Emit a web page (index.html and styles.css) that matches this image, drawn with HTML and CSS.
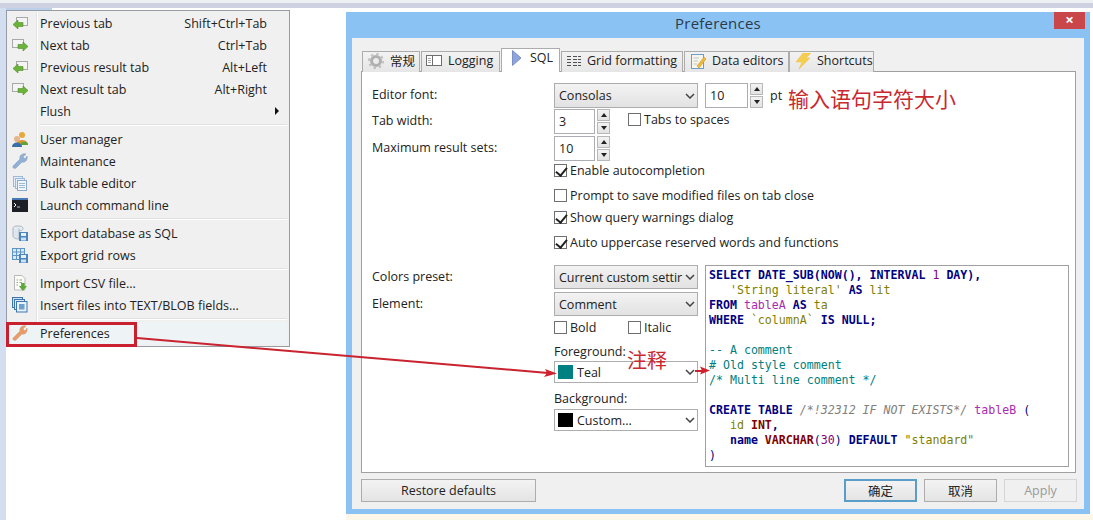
FILE: index.html
```html
<!DOCTYPE html>
<html lang="en">
<head>
<meta charset="utf-8">
<title>Preferences</title>
<link rel="stylesheet" href="styles.css">
</head>
<body>
<svg class="defs" width="0" height="0" aria-hidden="true">
  <defs>
    <symbol id="i-prev" viewBox="0 0 16 16">
      <rect x="4.500" y="2.500" width="11" height="8" fill="#f4f4f4" stroke="#a9a9a9"/>
      <path d="M1 9.500 L6 5 V7.500 H11 V11.500 H6 V14 Z" fill="#6cb33a" stroke="#4d8f26" stroke-width=".6"/>
    </symbol>
    <symbol id="i-next" viewBox="0 0 16 16">
      <rect x=".5" y="2.500" width="11" height="8" fill="#f4f4f4" stroke="#a9a9a9"/>
      <path d="M16 9.500 L11 5 V7.500 H6 V11.500 H11 V14 Z" fill="#6cb33a" stroke="#4d8f26" stroke-width=".6"/>
    </symbol>
    <symbol id="i-users" viewBox="0 0 16 16">
      <circle cx="10" cy="4" r="3" fill="#e8a83c"/>
      <path d="M5 12 C5 8 15 8 15 12 V13 H5 Z" fill="#d8942c"/>
      <path d="M9 13 C9 10 16 10 16 13 V14 H9 Z" fill="#5ca53a"/>
      <circle cx="5" cy="8" r="3" fill="#e6b48c"/>
      <path d="M0 16 C0 10 10 10 10 16 Z" fill="#3a6ea8"/>
    </symbol>
    <symbol id="i-wrench" viewBox="0 0 16 16">
      <path d="M1 13 L8 6 C7 3 10 0 14 1 L11 4 L13 6 L15 3 C16 7 13 10 10 9 L4 15 C3 16 0 15 1 13 Z" fill="#8fb0d8" stroke="#8c9aac" stroke-width=".5"/>
    </symbol>
    <symbol id="i-wrench-o" viewBox="0 0 16 16">
      <path d="M1 13 L8 6 C7 3 10 0 14 1 L11 4 L13 6 L15 3 C16 7 13 10 10 9 L4 15 C3 16 0 15 1 13 Z" fill="#ee9a62" stroke="#b0a79e" stroke-width=".5"/>
    </symbol>
    <symbol id="i-bulk" viewBox="0 0 16 16">
      <rect x="1.500" y="1.500" width="9" height="10" fill="#e4eef8" stroke="#9dbad8"/>
      <rect x="3.500" y="3.500" width="9" height="10" fill="#e4eef8" stroke="#9dbad8"/>
      <rect x="5.500" y="5.500" width="9" height="10" fill="#f2f7fc" stroke="#8aaccf"/>
      <path d="M7 8.500 H13 M7 10.500 H13 M7 12.500 H13" stroke="#9dbad8"/>
    </symbol>
    <symbol id="i-cmd" viewBox="0 0 16 16">
      <rect x="0" y="1" width="16" height="14" fill="#1c2026"/>
      <rect x="0" y="1" width="16" height="2" fill="#4a78b4"/>
      <path d="M2 6 L4 8 L2 10" stroke="#fff" fill="none"/>
      <path d="M5 10 H8" stroke="#bbb"/>
    </symbol>
    <symbol id="i-expdb" viewBox="0 0 16 16">
      <ellipse cx="6" cy="3.500" rx="5" ry="2.500" fill="#e8edf2" stroke="#a8b6c4"/>
      <path d="M1 3.500 V11 C1 13 4 14 7 14 V3.500" fill="#dfe6ec" stroke="#a8b6c4"/>
      <rect x="7" y="7" width="9" height="9" fill="#4d86bd"/>
      <rect x="9" y="8" width="5" height="3" fill="#e8f0f8"/>
      <rect x="9" y="12.500" width="5" height="3" fill="#cfe0f0"/>
    </symbol>
    <symbol id="i-expgrid" viewBox="0 0 16 16">
      <rect x=".5" y="1.500" width="12" height="11" fill="#dceaf6" stroke="#5d95c8"/>
      <path d="M.5 5 H12.500 M.5 8.500 H12.500 M4.500 1.500 V12.500 M8.500 1.500 V12.500" stroke="#5d95c8"/>
      <rect x="7" y="7" width="9" height="9" fill="#4d86bd"/>
      <rect x="9" y="8" width="5" height="3" fill="#e8f0f8"/>
      <rect x="9" y="12.500" width="5" height="3" fill="#cfe0f0"/>
    </symbol>
    <symbol id="i-csv" viewBox="0 0 16 16">
      <path d="M2.500 .5 H10 L13 3.500 V15 H2.500 Z" fill="#fbfbfb" stroke="#b8b8b8"/>
      <path d="M4.500 5 H6 M7.500 5 H10 M4.500 7.500 H6 M7.500 7.500 H10 M4.500 10 H6" stroke="#8fae6a"/>
      <path d="M9 8 H13 V11 H15.500 L11 16 L6.500 11 H9 Z" fill="#5da83a" transform="translate(1 0) scale(.9 1)"/>
    </symbol>
    <symbol id="i-ins" viewBox="0 0 16 16">
      <rect x=".5" y=".5" width="10" height="10" fill="#cfe0f0" stroke="#3f77ad"/>
      <rect x="2.500" y="2.500" width="10" height="10" fill="#dcebf8" stroke="#3f77ad"/>
      <rect x="4.500" y="4.500" width="10.500" height="10.500" fill="#e8f2fb" stroke="#3f77ad"/>
      <rect x="7" y="7" width="5.500" height="5.500" fill="#6fa0cf"/>
    </symbol>
    <symbol id="i-gear" viewBox="0 0 16 16">
      <circle cx="8" cy="8" r="4.500" fill="none" stroke="#b0b0b0" stroke-width="3"/>
      <circle cx="8" cy="8" r="7" fill="none" stroke="#c0c0c0" stroke-width="2" stroke-dasharray="2.500 3"/>
    </symbol>
    <symbol id="i-log" viewBox="0 0 16 16">
      <rect x=".5" y="2.500" width="15" height="10" fill="#fff" stroke="#6e6e6e"/>
      <path d="M6.500 2.500 V12.500" stroke="#6e6e6e"/>
      <path d="M2 5.500 H5 M2 7.500 H5 M2 9.500 H5" stroke="#a8a8a8"/>
    </symbol>
    <symbol id="i-sql" viewBox="0 0 16 16">
      <path d="M3.500 .5 L12 8 L3.500 15.500 Z" fill="#8ea4dc" stroke="#7b90c8"/>
    </symbol>
    <symbol id="i-grid" viewBox="0 0 16 16">
      <path d="M1 3.500 H5 M1 6.500 H5 M1 9.500 H5 M1 12.500 H5 M7 3.500 H11 M7 6.500 H11 M7 9.500 H11 M7 12.500 H11 M12 3.500 H15 M12 6.500 H15 M12 9.500 H15 M12 12.500 H15" stroke="#505050"/>
    </symbol>
    <symbol id="i-data" viewBox="0 0 16 16">
      <rect x="1.500" y="1.500" width="12" height="14" fill="#f6f6ee" stroke="#6c9cc8"/>
      <path d="M3.500 5 H9 M3.500 8 H8 M3.500 11 H7" stroke="#bfc4c8"/>
      <path d="M7 13 L14 4 L16 6 L9 15 Z" fill="#efbb3c" stroke="#c88a20" stroke-width=".5"/>
    </symbol>
    <symbol id="i-bolt" viewBox="0 0 16 16">
      <path d="M8 0 H16 L11 5 H15 L4 16 L7 9 H1 Z" fill="#f5cd50" stroke="#eec04a" stroke-width=".5"/>
    </symbol>
    <symbol id="i-chev" viewBox="0 0 10 6">
      <path d="M1 1 L5 5 L9 1" fill="none" stroke="#444" stroke-width="1.500"/>
    </symbol>
  </defs>
</svg>

<main class="desktop">
  <div class="strip-top"></div>
  <div class="strip-left"></div>
  <div class="menu-tab"></div>

  <nav class="menu">
    <div class="item"><svg class="ico"><use href="#i-prev"/></svg><span class="lbl">Previous tab</span><span class="key">Shift+Ctrl+Tab</span></div>
    <div class="item"><svg class="ico"><use href="#i-next"/></svg><span class="lbl">Next tab</span><span class="key">Ctrl+Tab</span></div>
    <div class="item"><svg class="ico"><use href="#i-prev"/></svg><span class="lbl">Previous result tab</span><span class="key">Alt+Left</span></div>
    <div class="item"><svg class="ico"><use href="#i-next"/></svg><span class="lbl">Next result tab</span><span class="key">Alt+Right</span></div>
    <div class="item"><span class="ico"></span><span class="lbl">Flush</span><span class="sub"></span></div>
    <div class="sep"></div>
    <div class="item"><svg class="ico"><use href="#i-users"/></svg><span class="lbl">User manager</span></div>
    <div class="item"><svg class="ico"><use href="#i-wrench"/></svg><span class="lbl">Maintenance</span></div>
    <div class="item"><svg class="ico"><use href="#i-bulk"/></svg><span class="lbl">Bulk table editor</span></div>
    <div class="item"><svg class="ico"><use href="#i-cmd"/></svg><span class="lbl">Launch command line</span></div>
    <div class="sep"></div>
    <div class="item"><svg class="ico"><use href="#i-expdb"/></svg><span class="lbl">Export database as SQL</span></div>
    <div class="item"><svg class="ico"><use href="#i-expgrid"/></svg><span class="lbl">Export grid rows</span></div>
    <div class="sep"></div>
    <div class="item"><svg class="ico"><use href="#i-csv"/></svg><span class="lbl">Import CSV file...</span></div>
    <div class="item"><svg class="ico"><use href="#i-ins"/></svg><span class="lbl">Insert files into TEXT/BLOB fields...</span></div>
    <div class="sep"></div>
    <div class="item item-hot"><svg class="ico"><use href="#i-wrench-o"/></svg><span class="lbl">Preferences</span></div>
  </nav>

  <section class="dialog">
    <header class="titlebar">
      <h1 class="title">Preferences</h1>
      <span class="close">×</span>
    </header>
    <div class="client">
      <div class="tabs">
        <div class="tab t1"><svg class="tab-ico"><use href="#i-gear"/></svg><span class="cjk">常规</span></div>
        <div class="tab t2"><svg class="tab-ico"><use href="#i-log"/></svg>Logging</div>
        <div class="tab t3 active"><svg class="tab-ico"><use href="#i-sql"/></svg>SQL</div>
        <div class="tab t4"><svg class="tab-ico"><use href="#i-grid"/></svg>Grid formatting</div>
        <div class="tab t5"><svg class="tab-ico"><use href="#i-data"/></svg>Data editors</div>
        <div class="tab t6"><svg class="tab-ico"><use href="#i-bolt"/></svg>Shortcuts</div>
      </div>

      <div class="panel">
        <div class="row r-font">
          <label class="lab">Editor font:</label>
          <div class="sel sel-font">Consolas<svg class="chev"><use href="#i-chev"/></svg></div>
          <div class="spin spin-gap"><div class="num">10</div><div class="arrows"><span class="up"></span><span class="dn"></span></div></div>
          <span class="pt">pt</span>
        </div>
        <div class="row r-tab">
          <label class="lab">Tab width:</label>
          <div class="spin"><div class="num">3</div><div class="arrows"><span class="up"></span><span class="dn"></span></div></div>
          <div class="chk chk-tabs"><span class="box"></span>Tabs to spaces</div>
        </div>
        <div class="row r-max">
          <label class="lab">Maximum result sets:</label>
          <div class="spin"><div class="num">10</div><div class="arrows"><span class="up"></span><span class="dn"></span></div></div>
        </div>
        <div class="checks">
          <div class="chk c1"><span class="box on"></span>Enable autocompletion</div>
          <div class="chk c2"><span class="box"></span>Prompt to save modified files on tab close</div>
          <div class="chk c3"><span class="box on"></span>Show query warnings dialog</div>
          <div class="chk c4"><span class="box on"></span>Auto uppercase reserved words and functions</div>
        </div>

        <div class="lower">
          <div class="lower-labels">
            <label class="lab lab-c">Colors preset:</label>
            <label class="lab lab-e">Element:</label>
          </div>
          <div class="lower-ctrl">
            <div class="sel sel-a"><span class="preset">Current custom settir</span><svg class="chev"><use href="#i-chev"/></svg></div>
            <div class="sel sel-b">Comment<svg class="chev"><use href="#i-chev"/></svg></div>
            <div class="style-row">
              <div class="chk chk-bold"><span class="box"></span>Bold</div>
              <div class="chk"><span class="box"></span>Italic</div>
            </div>
            <div class="cap cap-f">Foreground:</div>
            <div class="sel sel-c"><span class="swatch teal"></span>Teal<svg class="chev"><use href="#i-chev"/></svg></div>
            <div class="cap cap-b">Background:</div>
            <div class="sel sel-c sel-d"><span class="swatch black"></span>Custom...<svg class="chev"><use href="#i-chev"/></svg></div>
          </div>
<pre class="code"><b>SELECT</b> <b>DATE_SUB</b><b>(</b><b>NOW</b><b>(),</b> <b>INTERVAL</b> <i class="n">1</i> <b>DAY</b><b>),</b>
   <i class="s">'String literal'</i> <b>AS</b> <i class="s">lit</i>
<b>FROM</b> <i class="t">tableA</i> <b>AS</b> <i class="s">ta</i>
<b>WHERE</b> <i class="s">`columnA`</i> <b>IS</b> <b>NULL;</b>

<i class="c">-- A comment</i>
<i class="c"># Old style comment</i>
<i class="c">/* Multi line comment */</i>

<b>CREATE</b> <b>TABLE</b> <i class="g">/*!32312 IF NOT EXISTS*/</i> <i class="t">tableB</i> <i class="p">(</i>
   <i class="s">id</i> <b class="m">INT</b><b>,</b>
   <b>name</b> <b class="m">VARCHAR</b><i class="p">(</i><i class="n">30</i><i class="p">)</i> <b>DEFAULT</b> <i class="s">"standard"</i>
<i class="p">)</i></pre>
        </div>
      </div>

      <footer class="footer">
        <button class="btn btn-restore">Restore defaults</button>
        <div class="btn-group">
          <button class="btn btn-ok cjk">确定</button>
          <button class="btn cjk">取消</button>
          <button class="btn btn-off">Apply</button>
        </div>
      </footer>
    </div>
  </section>

  <div class="page-foot"></div>

  <div class="hl-box"></div>
  <svg class="arrows-layer" width="1093" height="520" viewBox="0 0 1093 520" aria-hidden="true">
    <path d="M137 338 L548 373" stroke="#c8232f" stroke-width="2" fill="none"/>
    <path d="M557 373.500 L545 369 L547 373 L544 377 Z" fill="#d0222c"/>
    <path d="M695 371 H702" stroke="#c8232f" stroke-width="2"/>
    <path d="M710 370.500 L700 366.500 L702 370.500 L700 374.500 Z" fill="#d0222c"/>
  </svg>
  <div class="note note-size">输入语句字符大小</div>
  <div class="note note-comment">注释</div>
</main>
</body>
</html>
```
FILE: styles.css
```css
* { box-sizing: border-box; }
html, body { margin: 0; padding: 0; background: #fff; }
body { font-family: "Open Sans", "Noto Sans", sans-serif; font-size: 12.5px; color: #222; }
.defs { position: absolute; }
.desktop { position: relative; width: 1093px; height: 520px; overflow: hidden; background: #fff; }
.cjk { font-family: "Open Sans", "Noto Sans CJK SC", sans-serif; }

.strip-top { position: absolute; left: 0; top: 0; width: 1093px; height: 8px; background: #cdd1e2; border-top: 3px solid #eef0f4; }
.strip-left { position: absolute; left: 0; top: 8px; width: 6px; height: 512px; background: #d3dff0; }
.menu-tab { position: absolute; left: 6px; top: 8px; width: 46px; height: 3px; background: #bcd0ea; }
.page-foot { position: absolute; left: 346px; top: 514px; width: 747px; height: 6px; background: #fdf7ea; }

/* context menu */
.menu { position: absolute; left: 6px; top: 10px; width: 284px; height: 337px; background: #f0f0f0; border: 1px solid #979ba6; padding: 1px 2px; display: flex; flex-direction: column; }
.menu::before { content: ""; position: absolute; left: 29px; top: 1px; bottom: 1px; width: 2px; background: linear-gradient(90deg, #e2e3e3 50%, #fff 50%); }
.item { position: relative; height: 22px; flex: none; display: flex; align-items: center; padding-left: 3px; padding-right: 20px; white-space: nowrap; }
.item-hot { background: #eef3f6; }
.ico { width: 16px; height: 16px; flex: none; }
.lbl { margin-left: 12px; flex: 1; }
.key { color: #222; }
.sub { position: absolute; right: 8px; top: 7px; width: 0; height: 0; border-left: 4px solid #111; border-top: 4px solid transparent; border-bottom: 4px solid transparent; }
.sep { position: relative; height: 6px; flex: none; margin-left: 29px; }
.sep::after { content: ""; position: absolute; left: 2px; right: 0; top: 2px; height: 2px; background: linear-gradient(#e0e0e0 50%, #fff 50%); }

/* dialog */
.dialog { position: absolute; left: 346px; top: 12px; width: 744px; height: 502px; background: #8ac2f4; display: flex; flex-direction: column; padding: 0 6px 5px; }
.titlebar { position: relative; height: 26px; flex: none; display: flex; align-items: center; justify-content: center; padding-bottom: 4px; }
.title { margin: 0; font-size: 15px; font-weight: 400; color: #2c3a48; letter-spacing: .2px; }
.close { position: absolute; right: -1px; top: 0; width: 31px; height: 17px; background: #c9474a; color: #fff; font-size: 15px; line-height: 15px; text-align: center; font-weight: 700; }
.client { flex: 1; background: #f0f0f0; padding: 10px 8px 0 9px; display: flex; flex-direction: column; }

.tabs { display: flex; height: 24px; margin-left: 1px; flex: none; position: relative; z-index: 1; align-items: flex-end; }
.tab { height: 21px; display: flex; align-items: center; background: linear-gradient(#f2f2f2, #e6e6e6); border: 1px solid #acacac; border-bottom: 0; margin-right: 1px; padding: 0 0 3px 5px; white-space: nowrap; }
.tab.active { height: 24px; background: #fff; padding-bottom: 6px; }
.tab-ico { width: 16px; height: 16px; flex: none; margin-right: 6px; }
.t1 { width: 58px; } .t2 { width: 79px; padding-left: 4px; } .t3 { width: 59px; padding-left: 7px; } .t3 .tab-ico { margin-right: 5px; } .t4 { width: 122px; padding-left: 4px; } .t4 .tab-ico { margin-right: 5px; } .t5 { width: 105px; margin-right: 0; } .t6 { width: 85px; }

.panel { height: 402px; margin-top: -1px; background: #fff; border: 1px solid #a0a0a0; padding: 11px 0 0 10px; flex: none; }
.row { display: flex; height: 25px; align-items: flex-start; }
.r-tab { margin-top: 1px; }
.r-max { margin-top: 2px; }
.lab { display: block; width: 182px; flex: none; line-height: 24px; }

.sel { position: relative; width: 144px; height: 24px; flex: none; display: flex; align-items: center; padding-left: 4px; background: linear-gradient(#f3f3f3, #e2e2e2); border: 1px solid #adadad; white-space: nowrap; }
.sel-font { height: 25px; }
.chev { position: absolute; right: 2px; top: 50%; margin-top: -3px; width: 10px; height: 6px; }
.preset { letter-spacing: -.08px; }
.sel-b { margin-top: 3px; }
.sel-c { height: 22px; background: #fff; margin-top: 1px; padding-left: 3px; }
.sel-d { margin-top: 2px; }
.swatch { width: 15px; height: 14px; flex: none; margin-right: 4px; }
.teal { background: #008080; }
.black { background: #000; }

.spin { display: flex; flex: none; height: 25px; }
.spin-gap { margin-left: 7px; }
.num { width: 41px; height: 25px; border: 1px solid #abadb3; padding-left: 4px; line-height: 23px; background: #fff; }
.spin-gap .num { width: 43px; }
.arrows { width: 13px; margin-left: 2px; height: 25px; display: flex; flex-direction: column; gap: 1px; }
.up, .dn { flex: 1; position: relative; background: linear-gradient(#f3f3f3, #e2e2e2); border: 1px solid #b8b8b8; }
.up::after, .dn::after { content: ""; position: absolute; left: 3px; top: 3px; border-left: 3px solid transparent; border-right: 3px solid transparent; }
.up::after { border-bottom: 4px solid #222; }
.dn::after { border-top: 4px solid #222; }
.pt { margin-left: 7px; line-height: 26px; }

.chk { display: flex; align-items: center; white-space: nowrap; height: 20px; }
.box { position: relative; width: 13px; height: 13px; flex: none; border: 1px solid #6f6f6f; background: #fff; margin-right: 3px; }
.box.on::after { content: ""; position: absolute; left: 3px; top: 0; width: 5px; height: 9px; border: solid #222; border-width: 0 2px 2px 0; transform: rotate(40deg); }
.chk-tabs { margin-left: 18px; height: 20px; }

.checks { margin-left: 182px; display: flex; flex-direction: column; }
.c1 { margin-top: -1px; }
.c2 { margin-top: 5px; }
.c3 { margin-top: 2px; }
.c4 { margin-top: 5px; }

.lower { display: flex; margin-top: 13px; align-items: flex-start; }
.lower-labels { width: 182px; flex: none; }
.lab-e { margin-top: 3px; }
.lower-ctrl { width: 144px; flex: none; }
.style-row { display: flex; margin-top: 1px; }
.chk-bold { width: 74px; }
.cap { line-height: 16px; }
.cap-f { margin-top: 7px; }
.cap-b { margin-top: 8px; }

.code { width: 364px; height: 202px; margin: 0 0 0 7px; padding: 2px 3px; border: 1px solid #a0a0a0; background: #fff; font-family: "DejaVu Sans Mono", "Liberation Mono", monospace; font-size: 11.6px; line-height: 15px; color: #000080; overflow: hidden; }
.code b { color: #000080; font-weight: 700; }
.code i { font-style: normal; }
.code .m { color: #800000; }
.code .s { color: #808000; }
.code .t { color: #a82bb0; }
.code .n { color: #800080; }
.code .c { color: #008080; }
.code .g { color: #808080; font-style: italic; }
.code .p { color: #000080; }

.footer { display: flex; justify-content: space-between; margin-top: 6px; margin-right: -1px; }
.btn-group { display: flex; gap: 7px; }
.btn { width: 73px; height: 23px; padding: 0; font: inherit; color: #222; background: linear-gradient(#f3f3f3, #e4e4e4); border: 1px solid #adadad; }
.cjk.btn { font-family: "Noto Sans CJK SC", sans-serif; }
.btn-restore { width: 175px; }
.btn-ok { border: 2px solid #5a9dc8; }
.btn-off { color: #9a9a9a; background: #f0f0f0; border-color: #d5d5d5; }

/* annotations */
.hl-box { position: absolute; left: 6px; top: 322px; width: 131px; height: 25px; border: 3px solid #c8202f; }
.arrows-layer { position: absolute; left: 0; top: 0; pointer-events: none; }
.note { position: absolute; color: #c9282f; font-family: "Noto Sans CJK SC", sans-serif; white-space: nowrap; line-height: 1; }
.note-size { left: 788px; top: 88px; font-size: 21px; }
.note-comment { left: 627px; top: 350px; font-size: 20px; }
```
